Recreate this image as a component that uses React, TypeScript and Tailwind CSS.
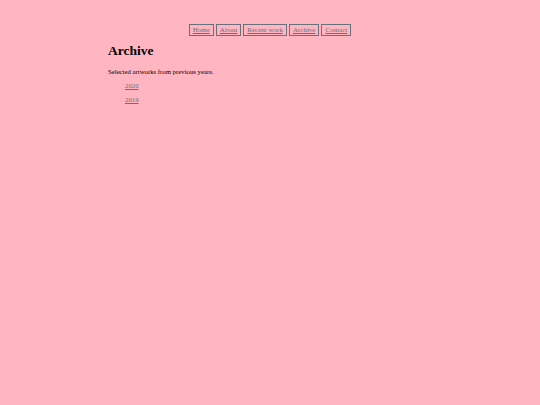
export default function App() {
  const links = ['Home', 'About', 'Recent work', 'Archive', 'Contact']
  return (
    <div className="min-h-screen w-full bg-[#ffb6c1] font-['Liberation_Serif',serif] text-black">
      <div className="mx-auto w-[324px] pt-[24px]">
        {/* nav */}
        <nav className="flex justify-center gap-[2px]">
          {links.map((l) => (
            <a
              key={l}
              href="#"
              className="flex h-[12px] items-center border border-[#66737c] px-[3px] text-[7px] leading-none text-[#66707a] underline"
            >
              {l}
            </a>
          ))}
        </nav>

        <h1 className="mt-[7px] text-[13.5px] font-bold leading-[16px]">Archive</h1>
        <p className="mt-[9px] text-[6.75px] leading-[8px]">Selected artworks from previous years.</p>

        <ul className="mt-[3px] pl-[17px] text-[6.75px] leading-[8px]">
          <li className="py-[3px]">
            <a href="#" className="text-[#66707a] underline">2020</a>
          </li>
          <li className="py-[3px]">
            <a href="#" className="text-[#66707a] underline">2019</a>
          </li>
        </ul>
      </div>
    </div>
  )
}
